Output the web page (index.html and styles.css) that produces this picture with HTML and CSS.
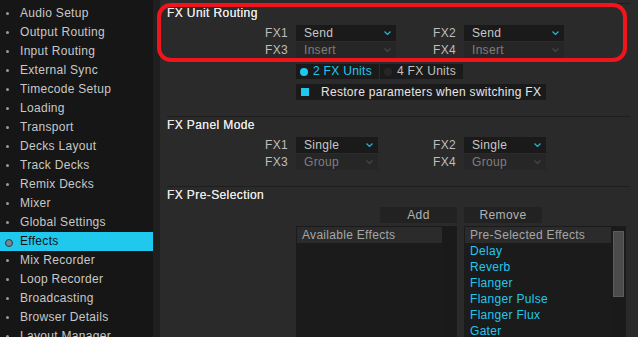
FILE: index.html
```html
<!DOCTYPE html>
<html lang="en">
<head>
  <meta charset="UTF-8">
  <meta name="viewport" content="width=device-width, initial-scale=1">
  <title>Preferences - Effects</title>
  <link rel="stylesheet" href="styles.css">
</head>
<body>
<div class="app">

  <!-- MENÚ LATERAL -->
  <nav class="sidebar">
    <div class="nav-item">Audio Setup</div>
    <div class="nav-item">Output Routing</div>
    <div class="nav-item">Input Routing</div>
    <div class="nav-item">External Sync</div>
    <div class="nav-item">Timecode Setup</div>
    <div class="nav-item">Loading</div>
    <div class="nav-item">Transport</div>
    <div class="nav-item">Decks Layout</div>
    <div class="nav-item">Track Decks</div>
    <div class="nav-item">Remix Decks</div>
    <div class="nav-item">Mixer</div>
    <div class="nav-item">Global Settings</div>
    <div class="nav-item active">Effects</div>
    <div class="nav-item">Mix Recorder</div>
    <div class="nav-item">Loop Recorder</div>
    <div class="nav-item">Broadcasting</div>
    <div class="nav-item">Browser Details</div>
    <div class="nav-item">Layout Manager</div>
  </nav>

  <main class="prefs">

    <!-- FX UNIT ROUTING -->
    <section class="group">
      <h2>FX Unit Routing</h2>
      <div class="field-grid">
        <span class="lbl">FX1</span>
        <div class="select">Send<svg class="chev" viewBox="0 0 7 4"><polyline points="0.5,0.5 3.5,3.5 6.5,0.5"/></svg></div>
        <span class="lbl">FX2</span>
        <div class="select">Send<svg class="chev" viewBox="0 0 7 4"><polyline points="0.5,0.5 3.5,3.5 6.5,0.5"/></svg></div>
        <span class="lbl">FX3</span>
        <div class="select off">Insert<svg class="chev" viewBox="0 0 7 4"><polyline points="0.5,0.5 3.5,3.5 6.5,0.5"/></svg></div>
        <span class="lbl">FX4</span>
        <div class="select off">Insert<svg class="chev" viewBox="0 0 7 4"><polyline points="0.5,0.5 3.5,3.5 6.5,0.5"/></svg></div>
      </div>
      <div class="radio-row">
        <div class="radio on"><span class="dot"></span>2 FX Units</div>
        <div class="radio"><span class="dot"></span>4 FX Units</div>
      </div>
      <div class="check-row">
        <span class="box"></span>Restore parameters when switching FX
      </div>
    </section>

    <!-- FX PANEL MODE -->
    <section class="group">
      <h2>FX Panel Mode</h2>
      <div class="field-grid narrow">
        <span class="lbl">FX1</span>
        <div class="select">Single<svg class="chev" viewBox="0 0 7 4"><polyline points="0.5,0.5 3.5,3.5 6.5,0.5"/></svg></div>
        <span class="lbl">FX2</span>
        <div class="select">Single<svg class="chev" viewBox="0 0 7 4"><polyline points="0.5,0.5 3.5,3.5 6.5,0.5"/></svg></div>
        <span class="lbl">FX3</span>
        <div class="select off">Group<svg class="chev" viewBox="0 0 7 4"><polyline points="0.5,0.5 3.5,3.5 6.5,0.5"/></svg></div>
        <span class="lbl">FX4</span>
        <div class="select off">Group<svg class="chev" viewBox="0 0 7 4"><polyline points="0.5,0.5 3.5,3.5 6.5,0.5"/></svg></div>
      </div>
    </section>

    <!-- FX PRE-SELECTION -->
    <section class="group last">
      <h2>FX Pre-Selection</h2>
      <div class="presel">
        <span></span>
        <div class="btn-cell right"><button class="btn">Add</button></div>
        <div class="btn-cell"><button class="btn wide">Remove</button></div>

        <span></span>
        <div class="list">
          <div class="list-body">
            <div class="list-head">Available Effects</div>
          </div>
          <div class="scroll"></div>
        </div>
        <div class="list">
          <div class="list-body">
            <div class="list-head">Pre-Selected Effects</div>
            <div class="list-item">Delay</div>
            <div class="list-item">Reverb</div>
            <div class="list-item">Flanger</div>
            <div class="list-item">Flanger Pulse</div>
            <div class="list-item">Flanger Flux</div>
            <div class="list-item">Gater</div>
          </div>
          <div class="scroll"><div class="thumb"></div></div>
        </div>
      </div>
    </section>
  </main>

  <!-- marco rojo de anotación -->
  <div class="callout"></div>
</div>
</body>
</html>
```

FILE: styles.css
```css
/* RESET */
* { box-sizing: border-box; margin: 0; padding: 0; }
body {
  font-family: "Liberation Sans", Arial, sans-serif;
  font-size: 12px; letter-spacing: 0.3px;
  background: #2a2a2a; color: #c6c6c6;
}
.app { display: flex; height: 337px; overflow: hidden; position: relative; }

/* MENÚ LATERAL */
.sidebar {
  width: 160px; flex-shrink: 0; padding-top: 4px;
  background: #161616; border-right: 7px solid #1f1f1f;
}
.nav-item {
  height: 19px; line-height: 19px; padding-left: 20px;
  position: relative; color: #c8c8c8; white-space: nowrap;
}
.nav-item::before {
  content: ""; position: absolute; left: 6px; top: 8px;
  width: 3px; height: 3px; border-radius: 50%; background: #9a9a9a;
}
.nav-item.active { background: #20c8ee; color: #111; }
.nav-item.active::before {
  left: 5px; top: 7px; width: 6px; height: 6px;
  background: #6f8a92; border: 1.5px solid #2a3a3e;
}

/* CONTENIDO */
.prefs { flex: 1; padding: 0 8px 0 7px; }
.group { border-top: 1px solid #1e1e1e; padding-top: 1px; padding-bottom: 16px; }
.group:first-child { margin-top: 3px; padding-top: 2px; }
.group.last { padding-bottom: 0; }
h2 {
  font-size: 12px; font-weight: normal; color: #e8e8e8;
  line-height: 14px; height: 14px; letter-spacing: 0.4px;
  text-shadow: 0 0 0.5px #e8e8e8;
}

/* CAMPOS */
.field-grid {
  display: grid; grid-template-columns: 129px 100px 68px 100px;
  row-gap: 1px; margin-top: 5px;
}
.field-grid.narrow { grid-template-columns: 129px 82px 86px 82px; }
.lbl { text-align: right; padding-right: 8px; line-height: 16px; color: #bdbdbd; }
.select {
  height: 16px; line-height: 16px; padding: 0 5px 0 8px;
  background: #1a1a1a; color: #c8c8c8;
  display: flex; justify-content: space-between; align-items: center;
}
.select.off { background: #262626; color: #7e7e7e; }
.chev { width: 7px; height: 4px; fill: none; stroke: #1fb6dc; stroke-width: 1.2; }
.select.off .chev { stroke: #3a4a50; }

/* RADIO Y CHECKBOX */
.radio-row { display: flex; margin: 6px 0 0 129px; gap: 1px; }
.radio {
  height: 15px; line-height: 15px; background: #1a1a1a; white-space: nowrap;
  display: flex; align-items: center; padding: 0 7px 0 4px;
  color: #c0c0c0;
}
.radio:first-child { width: 83px; }
.radio .dot {
  flex-shrink: 0; width: 8px; height: 8px; border-radius: 50%;
  background: #262626; margin-right: 5px;
}
.radio.on { color: #20c8ee; }
.radio.on .dot { background: #20c8ee; }

.check-row {
  display: flex; align-items: center; width: 250px; white-space: nowrap;
  height: 16px; margin: 5px 0 0 129px; padding-left: 5px;
  background: #1a1a1a; color: #e6e6e6;
}
.check-row .box { flex-shrink: 0; width: 8px; height: 8px; background: #20c8ee; margin-right: 12px; }

/* PRESELECCIÓN */
.presel {
  display: grid; grid-template-columns: 122px 161px 162px;
  column-gap: 7px; row-gap: 3px; margin-top: 5px;
}
.btn-cell { display: flex; }
.btn-cell.right { justify-content: flex-end; }
.btn {
  width: 77px; height: 16px; border: none; background: #222222;
  color: #b2b2b2; font: inherit; letter-spacing: 0.4px;
}
.btn.wide { width: 78px; }

.list { display: flex; height: 120px; background: #1b1b1b; padding: 1px 1px 0 1px; }
.list-body { flex: 1; }
.list-head {
  height: 16px; line-height: 16px; padding-left: 5px;
  background: #2b2b2b; color: #a6a6a6;
}
.list-item { height: 16px; line-height: 16px; padding-left: 5px; color: #20c8ee; }
.scroll { width: 14px; background: #1a1a1a; padding: 4px 1px 0 2px; }
.thumb { height: 66px; background: #4b4b4b; border: 1px solid #5c5c5c; }

/* MARCO ROJO */
.callout {
  position: absolute; left: 157px; top: 3px; width: 470px; height: 59px;
  border: 4px solid #f0141c; border-radius: 14px; pointer-events: none;
}
```
